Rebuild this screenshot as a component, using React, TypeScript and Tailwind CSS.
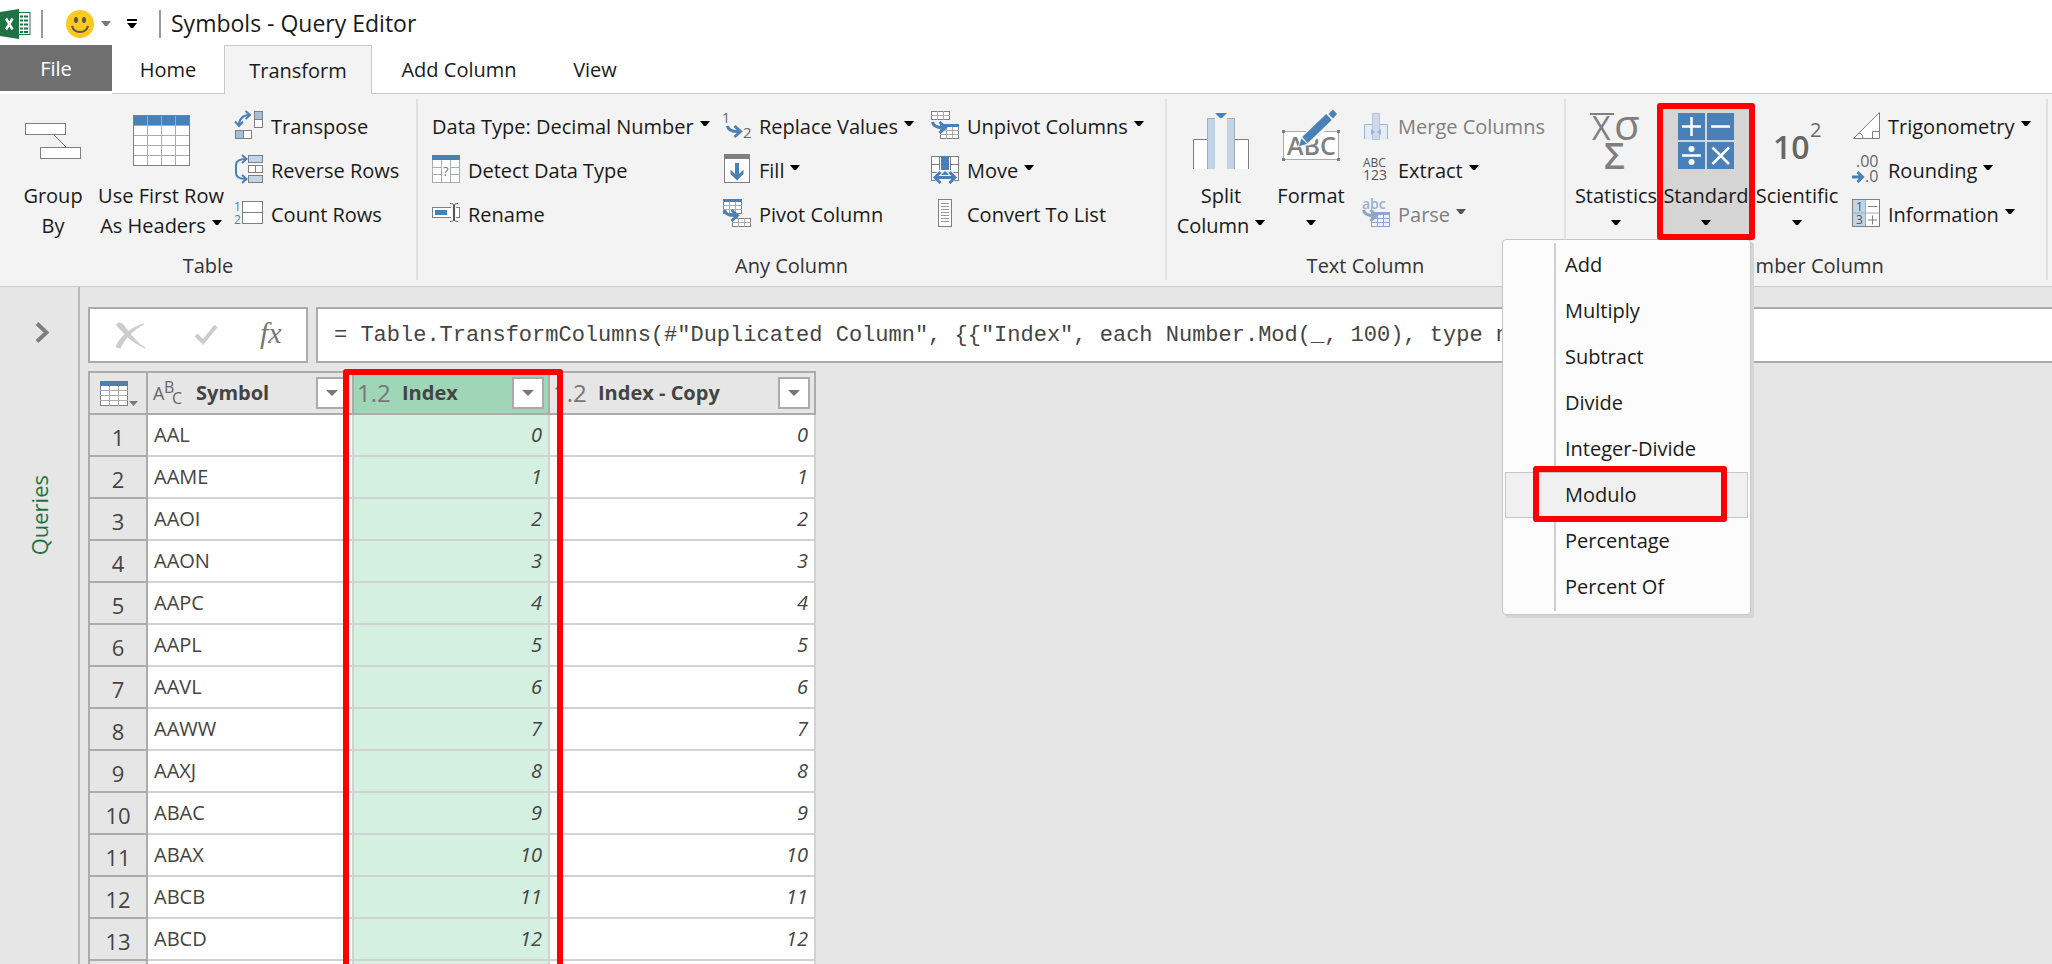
import React, { useState } from 'react';

const BLUE = '#4a80b8';
const PALE = '#c2d4e8';
const GRAY = '#7f7f7f';

const Caret = ({ className = 'text-black' }: { className?: string }) => (
    <svg width="10" height="5" viewBox="0 0 10 5" className={`shrink-0 ${className}`} aria-hidden="true">
        <path d="M0 0H10L6 5H4Z" fill="currentColor" />
    </svg>
);

const Icon = ({ size = 28, children }: { size?: number; children: React.ReactNode }) => (
    <svg
        width={size}
        height={size}
        viewBox={`0 0 ${size} ${size}`}
        className="shrink-0 overflow-visible"
        fontFamily="'Open Sans', sans-serif"
        aria-hidden="true"
    >
        {children}
    </svg>
);

// Curved arrow shared by the replace / pivot icons
const Swoosh = ({ x = 0, y = 0, color = BLUE }: { x?: number; y?: number; color?: string }) => (
    <g transform={`translate(${x} ${y})`} fill="none" stroke={color}>
        <path d="M1.500 0C2 4 5 6 14 5.500" strokeWidth="3" />
        <path d="M8.500 0L14.500 5.500L8.500 11" strokeWidth="3" />
    </g>
);

const GroupByIcon = () => (
    <Icon size={56}>
        <path d="M29 22L41 34" stroke="#666" strokeWidth="1" />
        <rect x="0.500" y="10.500" width="40" height="11" fill="#fff" stroke={GRAY} />
        <rect x="15.500" y="34.500" width="40" height="11" fill="#fff" stroke={GRAY} />
    </Icon>
);

const HeadersIcon = () => (
    <Icon size={56}>
        <rect x="0" y="2" width="56" height="51" fill="#fff" />
        <rect x="0" y="2" width="56" height="10" fill={BLUE} />
        <path d="M0 12.500H56M0 22.500H56M0 32.500H56M0 42.500H56M14.500 2V53M28.500 2V53M42.500 2V53" stroke="#ababab" />
        <rect x="0.500" y="2.500" width="56" height="50" fill="none" stroke={GRAY} />
    </Icon>
);

const TransposeIcon = () => (
    <Icon>
        <path d="M4 14C4 8 8 4 14 4" fill="none" stroke={BLUE} strokeWidth="2" />
        <path d="M10.500 0L15 4L10.500 8M0 10.500L4 15L8 10.500" fill="none" stroke={BLUE} strokeWidth="2" />
        <rect x="19.500" y="0.500" width="8" height="16" fill="#fff" stroke={GRAY} />
        <rect x="19.500" y="0.500" width="8" height="8" fill="#a5bfd9" stroke={GRAY} />
        <rect x="0.500" y="19.500" width="16" height="8" fill="#fff" stroke={GRAY} />
        <rect x="0.500" y="19.500" width="8" height="8" fill="#a5bfd9" stroke={GRAY} />
    </Icon>
);

const ReverseIcon = () => (
    <Icon>
        <path d="M11 4C5 4 1 6 1 10V18C1 22 5 24 11 24" fill="none" stroke={BLUE} strokeWidth="2" />
        <path d="M7 0L11.500 4L7 8M7 20L11.500 24L7 28" fill="none" stroke={BLUE} strokeWidth="2" />
        <rect x="13.500" y="0.500" width="14" height="7" fill={PALE} stroke={GRAY} />
        <rect x="13.500" y="10.500" width="14" height="7" fill="#fff" stroke={GRAY} />
        <path d="M20.500 10V18" stroke={GRAY} />
        <rect x="13.500" y="20.500" width="14" height="7" fill={PALE} stroke={GRAY} />
    </Icon>
);

const CountIcon = () => (
    <Icon>
        <text x="-1" y="12" fontSize="12" fill={BLUE}>1</text>
        <text x="-1" y="25" fontSize="12" fill={BLUE}>2</text>
        <rect x="7.500" y="2.500" width="20" height="22" fill="#fff" stroke={GRAY} />
        <path d="M7 13.500H28" stroke={GRAY} />
    </Icon>
);

const DetectIcon = () => (
    <Icon>
        <rect x="0.500" y="0.500" width="27" height="27" fill="#fff" stroke="#ababab" />
        <path d="M9.500 5V28M18.500 5V28M0 12.500H9M0 19.500H9M19 12.500H28M19 19.500H28" stroke="#ababab" />
        <rect width="28" height="5" fill={BLUE} />
        <text x="11" y="21" fontSize="13" fill={BLUE}>?</text>
    </Icon>
);

const RenameIcon = () => (
    <Icon>
        <rect x="0.500" y="8.500" width="27" height="10" fill="#fff" stroke={GRAY} />
        <rect x="3" y="11" width="12" height="5" fill={BLUE} />
        <rect x="19" y="7" width="5" height="13" fill="#f3f3f3" />
        <path d="M22 6V22" stroke="#555" strokeWidth="2" />
        <path d="M18 4.500C20 4.500 22 5 22 7C22 5 24 4.500 26 4.500M18 22.500C20 22.500 22 22 22 20C22 22 24 22.500 26 22.500" fill="none" stroke="#555" />
    </Icon>
);

const ReplaceIcon = () => (
    <Icon>
        <text x="-1" y="12" fontSize="14" fill="#666">1</text>
        <text x="20" y="27" fontSize="15" fill="#666">2</text>
        <Swoosh x={3} y={15} />
    </Icon>
);

const FillIcon = () => (
    <Icon>
        <rect x="1.500" y="-0.500" width="25" height="28" fill="#fff" stroke={GRAY} />
        <rect x="1" y="-1" width="26" height="5" fill={GRAY} />
        <path d="M14 8V22" stroke={BLUE} strokeWidth="4" />
        <path d="M7.500 14.500V19L14 25.500L20.500 19V14.500L14 21Z" fill={BLUE} />
    </Icon>
);

const PivotIcon = () => (
    <Icon>
        <rect x="0.500" y="0.500" width="18" height="14" fill="#fff" stroke={GRAY} />
        <path d="M0 6.500H19M0 10.500H19M6.500 3V15M12.500 3V15" stroke="#ababab" />
        <rect width="19" height="3" fill={BLUE} />
        <rect x="9.500" y="19.500" width="18" height="8" fill="#fff" stroke={GRAY} />
        <path d="M9 23.500H28M15.500 19V28M21.500 19V28" stroke="#ababab" />
        <Swoosh x={0} y={11} />
    </Icon>
);

const UnpivotIcon = () => (
    <Icon>
        <rect x="0.500" y="0.500" width="18" height="8" fill="#fff" stroke={GRAY} />
        <path d="M0 4.500H19M6.500 0V9M12.500 0V9" stroke="#ababab" />
        <rect x="9.500" y="13.500" width="18" height="14" fill="#fff" stroke={GRAY} />
        <path d="M9 19.500H28M9 23.500H28M15.500 15V28M21.500 15V28" stroke="#ababab" />
        <rect x="12" y="13" width="16" height="3" fill={BLUE} />
        <Swoosh x={0} y={11} />
    </Icon>
);

const MoveIcon = () => (
    <Icon>
        <rect x="0.500" y="1.500" width="27" height="24" fill="#fff" stroke={GRAY} />
        <path d="M8.500 1V18M19.500 1V18M0 9.500H8M0 17.500H8M20 9.500H28M20 17.500H28" stroke={GRAY} />
        <rect x="10" y="1" width="8" height="15" fill={BLUE} />
        <path d="M1 22L8 15H20L27 22L20 29H8Z" fill="#f3f3f3" />
        <path d="M4 22.500H24" stroke={BLUE} strokeWidth="3" />
        <path d="M9.500 17L4 22.500L9.500 28M18.500 17L24 22.500L18.500 28" fill="none" stroke={BLUE} strokeWidth="3" />
        <path d="M10 20L14 16L18 20Z" fill={BLUE} />
    </Icon>
);

const ListIcon = () => (
    <Icon>
        <rect x="7.500" y="0.500" width="13" height="27" fill="#fff" stroke={GRAY} />
        <path d="M10 4.500H18M10 7.500H18M10 10.500H18M10 13.500H18M10 16.500H18M10 19.500H18M10 22.500H18" stroke="#999" />
    </Icon>
);

const SplitIcon = () => (
    <Icon size={56}>
        <path d="M0.500 56V26.500H14V56ZM42 56V26.500H55.500V56Z" fill="#fff" />
        <path d="M0.500 56V26.500H14M42 26.500H55.500V56" fill="none" stroke={GRAY} />
        <rect x="14" y="5" width="8" height="51" fill={PALE} />
        <rect x="34" y="5" width="8" height="51" fill={PALE} />
        <path d="M14.500 56V5.500H22M34 5.500H41.500V56" fill="none" stroke="#ababab" />
        <path d="M22 0H34L29 5H27Z" fill={BLUE} />
    </Icon>
);

const FormatIcon = () => (
    <Icon size={56}>
        <rect x="0.500" y="18.500" width="55" height="28" fill="#fff" stroke="#ababab" />
        <text x="4" y="42" fontSize="25" fontWeight="600" fill={GRAY}>ABC</text>
        <path d="M-1 17h3v3h-3zM54 17h3v3h-3zM-1 45h3v3h-3zM54 45h3v3h-3z" fill={GRAY} />
        <path d="M16 33L20 23L47 -5L56 3L27 31Z" fill="#f3f3f3" stroke="#f3f3f3" strokeWidth="2" />
        <path d="M16 33L18.500 25.500L24 31Z" fill={BLUE} />
        <path d="M22 27L46 4" stroke={BLUE} strokeWidth="8" />
        <path d="M45.500 1L50 -3.500L54 1L50 5.500Z" fill={BLUE} />
    </Icon>
);

const MergeIcon = () => (
    <Icon>
        <rect x="2.500" y="13.500" width="23" height="15" fill="#e3edf8" />
        <path d="M2.500 28V13.500H10M18 13.500H25.500V28" fill="none" stroke="#9fb3cd" />
        <rect x="10.500" y="2.500" width="7" height="26" fill="#cddaeb" stroke="#b7c6dc" />
        <path d="M9 18L13 21L9 24ZM19 18L15 21L19 24Z" fill="#9fb3cd" />
    </Icon>
);

const ExtractIcon = () => (
    <Icon>
        <text x="1" y="12" fontSize="12" fill="#555">ABC</text>
        <text x="1" y="25" fontSize="14" fill="#555">123</text>
    </Icon>
);

const ParseIcon = () => (
    <Icon>
        <text x="0" y="10" fontSize="14" fontWeight="600" fill="#9aaecb">abc</text>
        <rect x="9.500" y="13.500" width="18" height="14" fill="#eaf2fb" stroke="#8fa6c6" />
        <path d="M9 19.500H28M9 23.500H28M15.500 15V28M21.500 15V28" stroke="#8fa6c6" />
        <rect x="12" y="13" width="16" height="3" fill="#8fa6c6" />
        <Swoosh x={0} y={11} color="#8fa6c6" />
    </Icon>
);

const StatisticsIcon = () => (
    <Icon size={56}>
        <path d="M2 1H26" stroke={GRAY} strokeWidth="2" />
        <text x="4" y="27" fontSize="32" fontWeight="500" fill={GRAY}>X</text>
        <text x="26" y="27" fontSize="42" fill={GRAY}>σ</text>
        <text x="16" y="56" fontSize="36" fontWeight="600" fill={GRAY}>Σ</text>
    </Icon>
);

const StandardIcon = () => (
    <Icon size={56}>
        <path d="M0 0h27v27h-27zM29 0h27v27h-27zM0 29h27v27h-27zM29 29h27v27h-27z" fill={BLUE} />
        <path d="M4 13.500H23M13.500 4V23M33 13.500H52M4 42.500H23M34.500 34.500L51 51M51 34.500L34.500 51" stroke="#fff" strokeWidth="2.500" />
        <circle cx="13.500" cy="36" r="3" fill="#fff" />
        <circle cx="13.500" cy="49" r="3" fill="#fff" />
    </Icon>
);

const ScientificIcon = () => (
    <Icon size={56}>
        <text x="4" y="46" fontSize="32" fontWeight="600" fill="#666">10</text>
        <text x="41" y="24" fontSize="20" fontWeight="500" fill="#666">2</text>
    </Icon>
);

const TrigIcon = () => (
    <Icon>
        <path d="M1.500 27.500L27.500 1.500V27.500Z" fill="#fff" stroke={GRAY} />
        <path d="M20.500 27.500V20.500H27.500M7 22C10 23 11 25 11 27.500" fill="none" stroke={GRAY} />
    </Icon>
);

const RoundingIcon = () => (
    <Icon>
        <text x="4" y="12" fontSize="16" fill="#666">.00</text>
        <text x="13" y="27" fontSize="16" fill="#666">.0</text>
        <path d="M0 22H9M5.500 17L10.500 22L5.500 27" fill="none" stroke={BLUE} strokeWidth="3" />
    </Icon>
);

const InformationIcon = () => (
    <Icon>
        <rect x="0.500" y="0.500" width="27" height="27" fill="#fff" />
        <rect x="0.500" y="0.500" width="13" height="27" fill={PALE} />
        <path d="M13.500 0V28M0 14H28" stroke="#ababab" />
        <rect x="0.500" y="0.500" width="27" height="27" fill="none" stroke={GRAY} />
        <text x="4" y="12" fontSize="12" fill="#555">1</text>
        <text x="4" y="25" fontSize="12" fill="#555">3</text>
        <path d="M16 7.500H25M16 21H25M20.500 16.500V25.500" stroke={GRAY} />
    </Icon>
);

const ExcelLogo = () => (
    <svg width="31" height="30" viewBox="0 0 31 30" className="shrink-0" aria-hidden="true">
        <rect x="17" y="3.500" width="13" height="22" fill="#fff" stroke="#1f7244" />
        <path d="M20 7.500H23M24 7.500H28M20 11.500H23M24 11.500H28M20 15.500H23M24 15.500H28M20 19.500H23M24 19.500H28M20 23H23M24 23H28" stroke="#1f7244" strokeWidth="2" />
        <path d="M0 3L19 0V30L0 27Z" fill="#1f7244" />
        <path d="M6 9.500L12.500 20.500M12.500 9.500L6 20.500" stroke="#fff" strokeWidth="2.500" />
    </svg>
);

const Smiley = () => (
    <svg width="28" height="28" viewBox="0 0 28 28" aria-hidden="true">
        <circle cx="14" cy="14" r="14" fill="#ffc81e" />
        <ellipse cx="10" cy="10" rx="2" ry="3" fill="#555" />
        <ellipse cx="18" cy="10" rx="2" ry="3" fill="#555" />
        <path d="M6 16C8 24 20 24 22 16" fill="none" stroke="#555" strokeWidth="2" />
    </svg>
);

type SmallProps = { icon?: React.ReactNode; label: string; menu?: boolean; disabled?: boolean };

const SmallButton = ({ icon, label, menu, disabled }: SmallProps) => (
    <button
        type="button"
        disabled={disabled}
        className={`flex h-11 items-center whitespace-nowrap ${disabled ? 'text-[#808080]' : 'text-[#1a1a1a]'}`}
    >
        {icon && <span className="mr-2">{icon}</span>}
        <span className="pt-1">{label}</span>
        {menu && <Caret className={disabled ? 'mb-1 ml-1.5 text-[#555]' : 'mb-1 ml-1.5 text-black'} />}
    </button>
);

type LargeProps = { icon: React.ReactNode; lines: string[]; menu?: boolean; className?: string };

const LargeButton = ({ icon, lines, menu, className = '' }: LargeProps) => (
    <button type="button" className={`flex h-[138px] flex-col items-center whitespace-nowrap pt-[10px] leading-[30px] ${className}`}>
        {icon}
        <span className="mt-3">{lines[0]}</span>
        <span className="flex h-[30px] items-center gap-1.5">
            {lines[1]}
            {menu && <Caret className="mb-2 text-black" />}
        </span>
    </button>
);

type GroupProps = { title: string; className: string; padding: string; children: React.ReactNode };

const Group = ({ title, className, padding, children }: GroupProps) => (
    <section aria-label={title} className={`flex flex-col border-r-2 border-[#e2e2e2] pt-1 ${className}`}>
        <div className={`flex h-[138px] ${padding}`}>{children}</div>
        <div className="mt-[11px] text-center leading-[28px] text-[#333]">{title}</div>
    </section>
);

const menuItems = ['Add', 'Multiply', 'Subtract', 'Divide', 'Integer-Divide', 'Modulo', 'Percentage', 'Percent Of'];

const StandardMenu = () => (
    <div role="menu" className="absolute right-0 top-[136px] z-10 w-[249px] rounded-sm border border-[#c6c6c6] bg-[#fcfcfc] px-0.5 pb-1 pt-0.5 shadow-[3px_3px_0_#d6d6d6]">
        <div className="absolute bottom-[3px] left-[51px] top-[3px] w-0.5 bg-[#d0d0d0]" />
        {menuItems.map((item) => (
            <div key={item} className="relative">
                <button
                    type="button"
                    role="menuitem"
                    className={`flex h-[46px] w-full items-center border pl-[59px] text-left ${
                        item === 'Modulo' ? 'border-[#c6c6c6] bg-[#f0f0f0]' : 'border-transparent'
                    }`}
                >
                    {item}
                </button>
                {item === 'Modulo' && (
                    <div className="pointer-events-none absolute -bottom-1 -top-1.5 left-7 right-[21px] rounded-[3px] border-[6px] border-[#ff0000]" />
                )}
            </div>
        ))}
    </div>
);

const Ribbon = () => (
    <div className="flex border-b border-[#c8c8c8] bg-[#f3f3f3] pb-[6px] pt-[5px]">
        <Group title="Table" className="w-[418px]" padding="pl-[17px]">
            <LargeButton icon={<GroupByIcon />} lines={['Group', 'By']} className="w-[72px]" />
            <LargeButton icon={<HeadersIcon />} lines={['Use First Row', 'As Headers']} menu className="ml-1.5 w-[132px]" />
            <div className="ml-2">
                <SmallButton icon={<TransposeIcon />} label="Transpose" />
                <SmallButton icon={<ReverseIcon />} label="Reverse Rows" />
                <SmallButton icon={<CountIcon />} label="Count Rows" />
            </div>
        </Group>
        <Group title="Any Column" className="w-[749px]" padding="pl-3.5">
            <div className="w-[291px]">
                <SmallButton label="Data Type: Decimal Number" menu />
                <SmallButton icon={<DetectIcon />} label="Detect Data Type" />
                <SmallButton icon={<RenameIcon />} label="Rename" />
            </div>
            <div className="w-[208px]">
                <SmallButton icon={<ReplaceIcon />} label="Replace Values" menu />
                <SmallButton icon={<FillIcon />} label="Fill" menu />
                <SmallButton icon={<PivotIcon />} label="Pivot Column" />
            </div>
            <div>
                <SmallButton icon={<UnpivotIcon />} label="Unpivot Columns" menu />
                <SmallButton icon={<MoveIcon />} label="Move" menu />
                <SmallButton icon={<ListIcon />} label="Convert To List" />
            </div>
        </Group>
        <Group title="Text Column" className="w-[399px]" padding="pl-1.5">
            <LargeButton icon={<SplitIcon />} lines={['Split', 'Column']} menu className="w-[96px]" />
            <LargeButton icon={<FormatIcon />} lines={['Format', '']} menu className="w-[84px]" />
            <div className="ml-[9px]">
                <SmallButton icon={<MergeIcon />} label="Merge Columns" disabled />
                <SmallButton icon={<ExtractIcon />} label="Extract" menu />
                <SmallButton icon={<ParseIcon />} label="Parse" menu disabled />
            </div>
        </Group>
        <Group title="Number Column" className="w-[482px]" padding="pl-[5px]">
            <LargeButton icon={<StatisticsIcon />} lines={['Statistics', '']} menu className="w-[90px]" />
            <div className="relative">
                <LargeButton icon={<StandardIcon />} lines={['Standard', '']} menu className="w-[90px] bg-[#d5d5d5]" />
                <StandardMenu />
                <div className="pointer-events-none absolute -left-1 -right-1 bottom-px top-0 z-20 rounded-[3px] border-[6px] border-[#ff0000]" />
            </div>
            <LargeButton icon={<ScientificIcon />} lines={['Scientific', '']} menu className="w-[92px]" />
            <div className="ml-[9px]">
                <SmallButton icon={<TrigIcon />} label="Trigonometry" menu />
                <SmallButton icon={<RoundingIcon />} label="Rounding" menu />
                <SmallButton icon={<InformationIcon />} label="Information" menu />
            </div>
        </Group>
    </div>
);

const FilterButton = ({ column }: { column: string }) => (
    <button type="button" aria-label={`Filter ${column}`} className="ml-auto flex h-8 w-8 shrink-0 items-center justify-center border-2 border-[#ababab] bg-white">
        <svg width="12" height="6" viewBox="0 0 12 6" aria-hidden="true">
            <path d="M0 0H12L6 6Z" fill="#777" />
        </svg>
    </button>
);

const symbols = ['AAL', 'AAME', 'AAOI', 'AAON', 'AAPC', 'AAPL', 'AAVL', 'AAWW', 'AAXJ', 'ABAC', 'ABAX', 'ABCB', 'ABCD'];

const DataTable = () => (
    <div className="relative w-[728px]">
        <table className="w-full table-fixed border-separate border-spacing-0 border-l-2 border-t-2 border-[#ababab] text-[#444]">
            <colgroup>
                <col className="w-[58px]" />
                <col className="w-[206px]" />
                <col className="w-[196px]" />
                <col className="w-[266px]" />
            </colgroup>
            <thead>
                <tr className="h-[42px] text-left">
                    <th className="border-b-2 border-r-2 border-[#ababab] p-0 pl-2.5">
                        <button type="button" aria-label="Table options" className="flex items-end">
                            <svg width="28" height="25" viewBox="0 0 28 25" aria-hidden="true">
                                <rect x="0.500" y="0.500" width="27" height="24" fill="#fff" stroke={GRAY} />
                                <path d="M0 9.500H28M0 14.500H28M0 19.500H28M9.500 5V25M18.500 5V25" stroke="#ababab" />
                                <rect width="28" height="5" fill={BLUE} />
                            </svg>
                            <svg width="10" height="5" viewBox="0 0 10 5" aria-hidden="true">
                                <path d="M1 0H10L5.500 5Z" fill="#777" />
                            </svg>
                        </button>
                    </th>
                    <th className="border-b-2 border-r-2 border-[#ababab] p-0 pl-[5px] pr-1">
                        <div className="flex items-center">
                            <svg width="30" height="26" viewBox="0 0 30 26" className="mr-[13px] overflow-visible font-normal" fontFamily="'Open Sans', sans-serif" fill="#666" aria-hidden="true">
                                <text x="0" y="20" fontSize="18">A</text>
                                <text x="11" y="13" fontSize="16">B</text>
                                <text x="19" y="24" fontSize="16">C</text>
                            </svg>
                            <span className="font-bold">Symbol</span>
                            <FilterButton column="Symbol" />
                        </div>
                    </th>
                    <th className="border-b-2 border-r-2 border-[#ababab] bg-[#9fd6b7] p-0 pl-[3px] pr-1">
                        <div className="flex items-center">
                            <span className="w-[45px] text-2xl font-medium text-[#777]">1.2</span>
                            <span className="font-bold">Index</span>
                            <FilterButton column="Index" />
                        </div>
                    </th>
                    <th className="border-b-2 border-r-2 border-[#ababab] p-0 pl-[3px] pr-1">
                        <div className="flex items-center">
                            <span className="w-[45px] text-2xl font-medium text-[#777]">1.2</span>
                            <span className="font-bold">Index - Copy</span>
                            <FilterButton column="Index - Copy" />
                        </div>
                    </th>
                </tr>
            </thead>
            <tbody>
                {symbols.map((symbol, i) => (
                    <tr key={symbol} className="h-[42px]">
                        <td className="border-b-2 border-r-2 border-[#ababab] p-0 pt-1 text-center text-[22px] leading-8">{i + 1}</td>
                        <td className="border-b-2 border-r-2 border-[#d2d2d2] bg-white p-0 pl-1.5">{symbol}</td>
                        <td className="border-b-2 border-r-2 border-[#d2d2d2] bg-[#d4f0e1] p-0 pr-1.5 text-right italic">{i}</td>
                        <td className="border-b-2 border-r-2 border-[#d2d2d2] bg-white p-0 pr-1.5 text-right italic">{i}</td>
                    </tr>
                ))}
                <tr className="h-[42px]">
                    <td className="border-r-2 border-[#ababab]" />
                    <td className="border-r-2 border-[#d2d2d2] bg-white" />
                    <td className="border-r-2 border-[#d2d2d2] bg-[#d4f0e1]" />
                    <td className="border-r-2 border-[#d2d2d2] bg-white" />
                </tr>
            </tbody>
        </table>
        <div className="pointer-events-none absolute -bottom-2 -top-0.5 left-[255px] w-[220px] rounded-[3px] border-[6px] border-[#ff0000]" />
    </div>
);

const App = () => {
    const [formula, setFormula] = useState(
        '= Table.TransformColumns(#"Duplicated Column", {{"Index", each Number.Mod(_, 100), type number}})'
    );

    return (
        <div className="flex h-screen flex-col overflow-hidden bg-[#e6e6e6] font-['Open_Sans','Noto_Sans',sans-serif] text-[20px] text-[#1a1a1a]">
            <header className="flex h-[45px] shrink-0 items-center bg-white pt-0.5">
                <ExcelLogo />
                <div className="ml-2.5 h-7 w-0.5 bg-[#999]" />
                <button type="button" aria-label="Send feedback" className="ml-[23px] flex items-center gap-[7px]">
                    <Smiley />
                    <Caret className="text-[#777]" />
                </button>
                <button type="button" aria-label="Customize toolbar" className="ml-4 flex flex-col items-center gap-0.5">
                    <span className="h-0.5 w-2.5 bg-black" />
                    <Caret />
                </button>
                <div className="ml-[22px] h-7 w-0.5 bg-[#999]" />
                <h1 className="ml-2.5 text-[23px]">Symbols - Query Editor</h1>
            </header>

            <nav className="flex h-[49px] shrink-0 bg-white">
                <button type="button" className="mb-[3px] w-[112px] bg-[#6f6f6f] pt-0.5 text-white">File</button>
                <div className="flex flex-1 items-stretch">
                    <button type="button" className="w-[112px] border-b border-[#c8c8c8] pt-0.5">Home</button>
                    <button type="button" className="w-[148px] border border-b-0 border-[#c8c8c8] bg-[#f3f3f3] pt-0.5">Transform</button>
                    <button type="button" className="w-[174px] border-b border-[#c8c8c8] pt-0.5">Add Column</button>
                    <button type="button" className="w-[98px] border-b border-[#c8c8c8] pt-0.5">View</button>
                    <div className="flex-1 border-b border-[#c8c8c8]" />
                </div>
            </nav>

            <Ribbon />

            <div className="flex min-h-0 flex-1">
                <aside className="flex w-20 shrink-0 flex-col items-center border-r-2 border-[#b9b9b9] pt-[35px]">
                    <button type="button" aria-label="Expand queries" className="pl-1.5">
                        <svg width="15" height="21" viewBox="0 0 15 21" fill="none" aria-hidden="true">
                            <path d="M2 1.500L11.500 10.500L2 19.500" stroke={GRAY} strokeWidth="4" />
                        </svg>
                    </button>
                    <div className="mt-[132px] rotate-180 text-[22px] text-[#217346] [writing-mode:vertical-rl]">Queries</div>
                </aside>

                <main className="flex min-w-0 flex-1 flex-col pl-2 pt-5">
                    <div className="flex">
                        <div className="flex h-14 w-[220px] shrink-0 items-center border-2 border-[#ababab] bg-white pl-[26px]">
                            <button type="button" aria-label="Cancel">
                                <svg width="29" height="27" viewBox="0 0 29 27" aria-hidden="true">
                                    <path d="M1 2C4 0 6 1 8 4C14 12 22 22 29 26C20 22 12 16 4 7C2 5 0 3 1 2Z" fill="#ccc" stroke="#ccc" />
                                    <path d="M28 2C20 6 10 14 4 26L0 25C4 14 16 5 28 2Z" fill="#ccc" stroke="#ccc" />
                                </svg>
                            </button>
                            <button type="button" aria-label="Accept" className="ml-[49px]">
                                <svg width="24" height="22" viewBox="0 0 24 22" fill="none" aria-hidden="true">
                                    <path d="M2 11L9 18L22 2" stroke="#ccc" strokeWidth="4" />
                                </svg>
                            </button>
                            <button type="button" aria-label="Insert function" className="ml-[42px] pb-1 font-['Liberation_Serif',serif] text-[30px] italic leading-8 text-[#777]">
                                fx
                            </button>
                        </div>
                        <input
                            aria-label="Formula"
                            value={formula}
                            onChange={(e) => setFormula(e.target.value)}
                            className="ml-2 h-14 min-w-0 flex-1 border-2 border-r-0 border-[#ababab] bg-white pl-4 font-['Liberation_Mono',monospace] text-[22px] text-[#444] outline-none"
                        />
                    </div>
                    <div className="mt-2">
                        <DataTable />
                    </div>
                </main>
            </div>
        </div>
    );
};

export default App;
